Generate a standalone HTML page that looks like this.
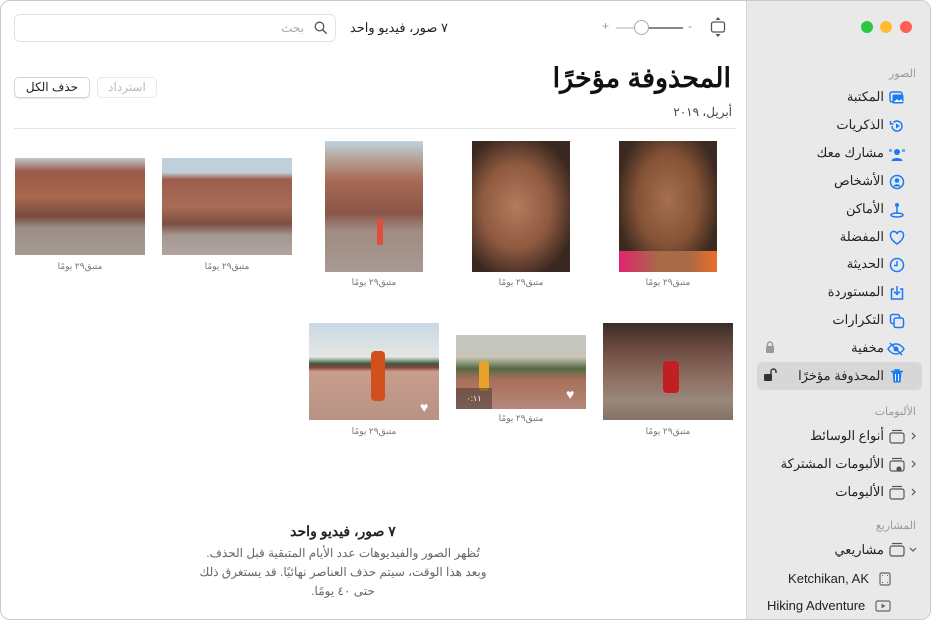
<!DOCTYPE html>
<html><head><meta charset="utf-8"><style>
*{margin:0;padding:0;box-sizing:border-box}
body{width:931px;height:620px;background:#fff;font-family:"Liberation Sans","Noto Sans CJK SC",sans-serif;overflow:hidden;position:relative}
.win{position:absolute;left:0;top:0;width:931px;height:620px;border:1px solid #c9c9c9;border-radius:10px;overflow:hidden;background:#fff}
.side{position:absolute;left:745px;top:0;width:186px;height:620px;background:#e9e9e9;border-left:1px solid #d6d6d6}
.t{position:absolute;direction:rtl;white-space:nowrap}
.si{position:absolute;right:48px;font-size:13px;color:#222;direction:rtl;white-space:nowrap;line-height:16px}
.ic{position:absolute;left:142px;width:16px;height:16px}
.hd{position:absolute;right:16px;font-size:11px;color:#999;direction:rtl}
.ph{position:absolute}
.cap{position:absolute;font-size:9px;color:#777;direction:rtl;white-space:nowrap;transform:translateX(-50%)}
.dot{position:absolute;top:20px;width:12px;height:12px;border-radius:50%}
</style></head><body><div class="win">

<div class="side">
<div class="dot" style="left:114px;background:#2ac840"></div>
<div class="dot" style="left:133px;background:#febc2e"></div>
<div class="dot" style="left:153px;background:#ff5f57"></div>
<div class="hd" style="top:66px">الصور</div>
<div class="hd" style="top:404px">الألبومات</div>
<div class="hd" style="top:518px">المشاريع</div>
<div style="position:absolute;left:10px;top:361px;width:165px;height:28px;background:#d7d7d7;border-radius:6px"></div>

<div class="si" style="top:88px">المكتبة</div>
<svg class="ic" style="top:89px" viewBox="0 0 16 16"><rect x="1" y="2" width="12" height="10" rx="2" fill="none" stroke="#1a7cf5" stroke-width="1.5"/><rect x="3.5" y="4.5" width="11" height="9" rx="1.5" fill="#1a7cf5"/><path d="M5 12l3-3 2 2 2-2 2 3z" fill="#fff"/></svg>
<div class="si" style="top:116px">الذكريات</div>
<svg class="ic" style="top:117px" viewBox="0 0 16 16"><path d="M3 8a5 5 0 1 0 1.5-3.5" fill="none" stroke="#1a7cf5" stroke-width="1.5"/><path d="M1.5 3v3h3" fill="none" stroke="#1a7cf5" stroke-width="1.5"/><path d="M7 5.5v5l4-2.5z" fill="#1a7cf5"/></svg>
<div class="si" style="top:144px">مشارك معك</div>
<svg class="ic" style="top:145px" viewBox="0 0 16 16"><circle cx="8" cy="6" r="3" fill="#1a7cf5"/><path d="M2.5 15c0-4 11-4 11 0z" fill="#1a7cf5"/><rect x="0" y="3" width="3" height="3" fill="#1a7cf5" opacity=".6"/><rect x="13" y="3" width="3" height="3" fill="#1a7cf5" opacity=".6"/></svg>
<div class="si" style="top:172px">الأشخاص</div>
<svg class="ic" style="top:173px" viewBox="0 0 16 16"><circle cx="8" cy="8" r="6.5" fill="none" stroke="#1a7cf5" stroke-width="1.5"/><circle cx="8" cy="6.5" r="2.3" fill="#1a7cf5"/><path d="M4 12.5c1.5-3 6.5-3 8 0" fill="#1a7cf5"/></svg>
<div class="si" style="top:200px">الأماكن</div>
<svg class="ic" style="top:201px" viewBox="0 0 16 16"><circle cx="8" cy="3" r="2" fill="#1a7cf5"/><path d="M8 5v7" stroke="#1a7cf5" stroke-width="1.5"/><ellipse cx="8" cy="13" rx="6" ry="2" fill="none" stroke="#1a7cf5" stroke-width="1.5"/></svg>
<div class="si" style="top:228px">المفضلة</div>
<svg class="ic" style="top:229px" viewBox="0 0 16 16"><path d="M8 14S1.5 10 1.5 5.5A3.2 3.2 0 0 1 8 4a3.2 3.2 0 0 1 6.5 1.5C14.5 10 8 14 8 14z" fill="none" stroke="#1a7cf5" stroke-width="1.5"/></svg>
<div class="si" style="top:255px">الحديثة</div>
<svg class="ic" style="top:256px" viewBox="0 0 16 16"><circle cx="8" cy="8" r="6.5" fill="none" stroke="#1a7cf5" stroke-width="1.5"/><path d="M8 4v4.5H5" fill="none" stroke="#1a7cf5" stroke-width="1.5"/></svg>
<div class="si" style="top:283px">المستوردة</div>
<svg class="ic" style="top:284px" viewBox="0 0 16 16"><path d="M5 4H2.5v10h11V4H11" fill="none" stroke="#1a7cf5" stroke-width="1.5"/><path d="M8 1v8M5 6.5l3 3 3-3" fill="none" stroke="#1a7cf5" stroke-width="1.5"/></svg>
<div class="si" style="top:311px">التكرارات</div>
<svg class="ic" style="top:312px" viewBox="0 0 16 16"><rect x="1.5" y="1.5" width="9" height="9" rx="2" fill="none" stroke="#1a7cf5" stroke-width="1.5"/><rect x="5" y="5" width="9.5" height="9.5" rx="2" fill="#e9e9e9" stroke="#1a7cf5" stroke-width="1.5"/></svg>
<div class="si" style="top:339px">مخفية</div>
<svg class="ic" style="top:340px;left:140px;width:18px" viewBox="0 0 18 16"><path d="M1 8s3-5 8-5 8 5 8 5-3 5-8 5-8-5-8-5z" fill="none" stroke="#1a7cf5" stroke-width="1.5"/><circle cx="9" cy="8" r="2.5" fill="#1a7cf5"/><path d="M3 2l12 12" stroke="#1a7cf5" stroke-width="1.5"/></svg>
<svg style="position:absolute;left:18px;top:340px" width="10" height="12" viewBox="0 0 10 12"><path d="M2.5 5V3.5a2.5 2.5 0 0 1 5 0V5" fill="none" stroke="#999" stroke-width="1.4"/><rect x="1" y="5" width="8" height="7" rx="1" fill="#999"/></svg>
<div class="si" style="top:367px">المحذوفة مؤخرًا</div>
<svg class="ic" style="top:367px" viewBox="0 0 16 16"><path d="M2 3.5h12M6 3.5V2h4v1.5" fill="none" stroke="#1a7cf5" stroke-width="1.5"/><path d="M3.5 4l1 10.5h7l1-10.5z" fill="#1a7cf5"/><path d="M6.5 6v7M9.5 6v7" stroke="#fff" stroke-width="1"/></svg>
<svg style="position:absolute;left:16px;top:367px" width="14" height="13" viewBox="0 0 14 13"><path d="M8 6V3.5a2.5 2.5 0 0 1 5 0V5" fill="none" stroke="#333" stroke-width="1.4"/><rect x="1" y="6" width="8" height="7" rx="1" fill="#333"/></svg>

<div class="si" style="top:427px">أنواع الوسائط</div>
<div class="si" style="top:455px">الألبومات المشتركة</div>
<div class="si" style="top:483px">الألبومات</div>
<div class="si" style="top:541px">مشاريعي</div>
<svg style="position:absolute;left:140px;top:428px" width="36" height="140" viewBox="0 0 36 140" fill="none" stroke="#555" stroke-width="1.2">
<path d="M25 4l3 3-3 3"/><rect x="3" y="4" width="14" height="10" rx="2"/><path d="M5 1.5h10"/>
<path d="M25 32l3 3-3 3"/><rect x="3" y="32" width="14" height="10" rx="2"/><path d="M5 29.5h10"/><circle cx="12" cy="40" r="2" fill="#555"/>
<path d="M25 60l3 3-3 3"/><rect x="3" y="60" width="14" height="10" rx="2"/><path d="M5 57.5h10"/>
<path d="M23 119l3 3 3-3"/><rect x="3" y="117" width="14" height="10" rx="2"/><path d="M5 114.5h10"/>
</svg>
<div style="position:absolute;right:63px;top:570px;font-size:13px;color:#222">Ketchikan, AK</div>
<svg style="position:absolute;left:132px;top:571px" width="12" height="14" viewBox="0 0 12 14"><rect x="1" y="1" width="10" height="12" rx="1.5" fill="none" stroke="#666" stroke-width="1.2"/><path d="M3 3.5h1M8 3.5h1M3 10.5h1M8 10.5h1" stroke="#666"/></svg>
<div style="position:absolute;left:20px;top:597px;font-size:13px;color:#222">Hiking Adventure</div>
<svg style="position:absolute;left:128px;top:599px" width="16" height="12" viewBox="0 0 16 12"><rect x="1" y="1" width="14" height="10" rx="1.5" fill="none" stroke="#666" stroke-width="1.2"/><path d="M6.5 3.5v5l4-2.5z" fill="#666"/></svg>
</div>

<!-- toolbar -->
<div style="position:absolute;left:13px;top:13px;width:322px;height:28px;border:1px solid #e3e3e3;border-radius:6px"></div>
<div class="t" style="right:626px;top:20px;font-size:12px;color:#aaa">بحث</div>
<svg style="position:absolute;left:313px;top:20px" width="14" height="14" viewBox="0 0 14 14"><circle cx="5.5" cy="5.5" r="4.3" fill="none" stroke="#555" stroke-width="1.3"/><path d="M8.7 8.7l4 4" stroke="#555" stroke-width="1.4"/></svg>
<div class="t" style="right:482px;top:19px;font-size:13px;color:#222">٧ صور، فيديو واحد</div>
<div style="position:absolute;left:601px;top:18px;font-size:12px;color:#999">+</div>
<div style="position:absolute;left:615px;top:26px;width:67px;height:2px;background:#d8d8d8"></div>
<div style="position:absolute;left:640px;top:26px;width:42px;height:2px;background:#888"></div>
<div style="position:absolute;left:633px;top:19px;width:15px;height:15px;border-radius:50%;background:#fff;border:1px solid #aaa"></div>
<div style="position:absolute;left:687px;top:18px;font-size:12px;color:#999">-</div>
<svg style="position:absolute;left:709px;top:15px" width="16" height="22" viewBox="0 0 16 22"><path d="M8 1l-2.5 3h5z" fill="#555"/><rect x="1.5" y="6" width="13" height="10" rx="2" fill="none" stroke="#555" stroke-width="1.3"/><path d="M8 21l-2.5-3h5z" fill="#555"/></svg>

<div class="t" style="right:199px;top:62px;font-size:27px;font-weight:bold;color:#111">المحذوفة مؤخرًا</div>
<div class="t" style="right:198px;top:104px;font-size:12px;color:#444">أبريل، ٢٠١٩</div>
<div style="position:absolute;left:13px;top:127px;width:722px;height:1px;background:#e4e4e4"></div>
<div style="position:absolute;left:96px;top:76px;width:60px;height:21px;border:1px solid #e8e8e8;border-radius:5px;font-size:12px;color:#bbb;text-align:center;line-height:19px;direction:rtl">استرداد</div>
<div style="position:absolute;left:13px;top:76px;width:76px;height:21px;border:1px solid #d4d4d4;border-radius:5px;font-size:12px;color:#222;text-align:center;line-height:19px;direction:rtl;box-shadow:0 1px 1px rgba(0,0,0,.1)">حذف الكل</div>

<!-- photos -->
<div class="ph" style="left:14px;top:157px;width:130px;height:97px;background:linear-gradient(#c4c8cc 0,#9a5a4a 14%,#a7684f 40%,#7a4a3d 60%,#9c8f88 72%,#a69a93 100%)"></div>
<div class="ph" style="left:161px;top:157px;width:130px;height:97px;background:linear-gradient(#bfd0dc 0,#c0d0da 15%,#9d5d4c 22%,#a86b57 50%,#7d5042 68%,#a59893 80%,#b0a49d 100%)"></div>
<div class="ph" style="left:324px;top:140px;width:98px;height:131px;background:linear-gradient(#bfd3e2 0,#b7a89f 12%,#a86a56 30%,#8a5647 55%,#9f8b82 68%,#a79a92 100%)"></div>
<div class="ph" style="left:471px;top:140px;width:98px;height:131px;background:radial-gradient(ellipse at 45% 50%,#b47a5d 0,#8f5a40 45%,#3a2820 80%),#7a4a33"></div>
<div class="ph" style="left:618px;top:140px;width:98px;height:131px;background:radial-gradient(ellipse at 50% 45%,#a6704f 0,#845236 45%,#3c2a20 75%),linear-gradient(90deg,#5a6a3a,#c14f4f)"></div>
<div class="ph" style="left:618px;top:250px;width:98px;height:21px;background:linear-gradient(90deg,#e0246e,#a86a48 40%,#a86a48 70%,#e96e2b)"></div>
<div class="ph" style="left:308px;top:322px;width:130px;height:97px;background:linear-gradient(#c8d9e6 0,#e4e6e2 35%,#3b5a3b 42%,#8b4238 46%,#c89e8e 50%,#b89283 100%)"></div>
<div class="ph" style="left:455px;top:334px;width:130px;height:74px;background:linear-gradient(#c4c6c0 0,#c9c6b8 30%,#556a44 45%,#a86e5b 60%,#b48979 100%)"></div>
<div class="ph" style="left:602px;top:322px;width:130px;height:97px;background:linear-gradient(#3b2b27 0,#6a4a40 25%,#8d6d5f 55%,#9a877c 80%,#857266 100%)"></div>
<div class="ph" style="left:370px;top:350px;width:14px;height:50px;background:#d2501e;border-radius:4px"></div>
<div class="ph" style="left:478px;top:360px;width:10px;height:30px;background:#e6a22a;border-radius:3px"></div>
<div class="ph" style="left:662px;top:360px;width:16px;height:32px;background:#c21f25;border-radius:4px"></div>
<div class="ph" style="left:376px;top:218px;width:6px;height:26px;background:#e04e3b"></div>
<div class="ph" style="left:455px;top:387px;width:36px;height:21px;background:rgba(60,50,45,.5);color:#fff;font-size:8px;line-height:21px;text-align:center">٠:١١</div>
<div style="position:absolute;left:419px;top:398px;color:#fff;font-size:14px">♥</div>
<div style="position:absolute;left:565px;top:385px;color:#fff;font-size:14px">♥</div>

<div class="cap" style="left:79px;top:260px">متبق٢٩ يومًا</div>
<div class="cap" style="left:226px;top:260px">متبق٢٩ يومًا</div>
<div class="cap" style="left:373px;top:276px">متبق٢٩ يومًا</div>
<div class="cap" style="left:520px;top:276px">متبق٢٩ يومًا</div>
<div class="cap" style="left:667px;top:276px">متبق٢٩ يومًا</div>
<div class="cap" style="left:373px;top:425px">متبق٢٩ يومًا</div>
<div class="cap" style="left:520px;top:412px">متبق٢٩ يومًا</div>
<div class="cap" style="left:667px;top:425px">متبق٢٩ يومًا</div>

<div style="position:absolute;left:192px;top:520px;width:300px;text-align:center;direction:rtl">
<div style="font-size:14px;font-weight:bold;color:#222;line-height:20px">٧ صور، فيديو واحد</div>
<div style="font-size:12px;color:#666;line-height:19px;margin-top:3px">تُظهر الصور والفيديوهات عدد الأيام المتبقية قبل الحذف.<br>وبعد هذا الوقت، سيتم حذف العناصر نهائيًا. قد يستغرق ذلك<br>حتى ٤٠ يومًا.</div>
</div>
</div></body></html>
